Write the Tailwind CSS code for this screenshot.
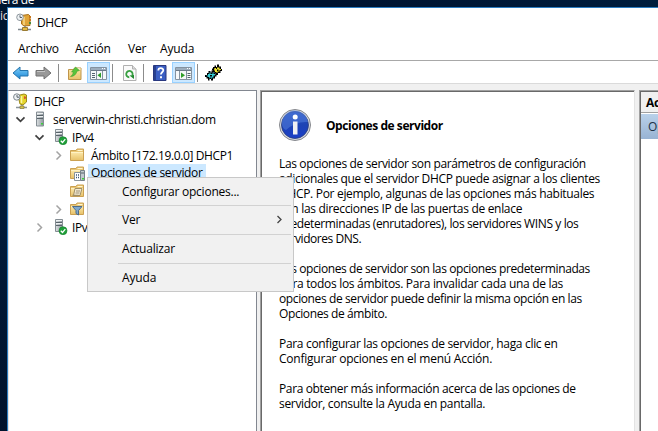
<!DOCTYPE html>
<html lang="es">
<head>
<meta charset="utf-8">
<title>DHCP</title>
<script src="https://cdn.jsdelivr.net/npm/@tailwindcss/browser@4"></script>
</head>
<body class="w-[658px] h-[431px] overflow-hidden bg-[#00142d] font-['Open_Sans','Noto_Sans',sans-serif] text-[12px] leading-[15px] text-black">
<svg class="absolute w-0 h-0">
  <defs>
    <linearGradient id="fold" x1="0" y1="0" x2="0" y2="1"><stop offset="0" stop-color="#fbe6a6"/><stop offset="1" stop-color="#e8c36c"/></linearGradient>
    <linearGradient id="srv" x1="0" y1="0" x2="1" y2="0"><stop offset="0" stop-color="#dde1e3"/><stop offset="1" stop-color="#8d969c"/></linearGradient>
    <linearGradient id="blu" x1="0" y1="0" x2="0" y2="1"><stop offset="0" stop-color="#7fd0fa"/><stop offset="1" stop-color="#1b86d6"/></linearGradient>
    <linearGradient id="info" x1="0" y1="0" x2="0" y2="1"><stop offset="0" stop-color="#2a55c4"/><stop offset="0.5" stop-color="#1d43b4"/><stop offset="1" stop-color="#1b3fc8"/></linearGradient>
    <symbol id="folder" viewBox="0 0 16 16">
      <path d="M1.500 3.500h5.500l1-1.500h6.500v11.500h-13z" fill="#e9c673" stroke="#cba152"/>
      <path d="M2 5.500h12v7.500h-12z" fill="url(#fold)"/>
      <path d="M8.500 3.500h5" stroke="#fff6d0"/>
      <path d="M2 5.500h12" stroke="#fff2c4"/>
    </symbol>
    <symbol id="server" viewBox="0 0 16 16">
      <path d="M4.500 1h7v14h-7z" fill="url(#srv)" stroke="#858e94"/>
      <path d="M5 4.500h6M5 7.500h6" stroke="#59636a"/>
      <path d="M5 2.500h6M5 5.500h6" stroke="#edf0f1"/>
      <path d="M9 12h2v1.500H9z" fill="#3bd13a"/>
    </symbol>
    <symbol id="serverok" viewBox="0 0 16 16">
      <path d="M2.500 .5h7v12h-7z" fill="url(#srv)" stroke="#858e94"/>
      <path d="M3 3.500h6M3 6.500h6" stroke="#59636a"/>
      <path d="M3 1.500h6M3 4.500h6" stroke="#edf0f1"/>
      <circle cx="10" cy="11.700" r="4" fill="#1fa03a" stroke="#128028" stroke-width=".6"/>
      <path d="M7.800 11.800l1.700 1.700 2.800-3.300" fill="none" stroke="#fff" stroke-width="1.300"/>
    </symbol>
    <symbol id="open" viewBox="0 0 11 11"><path d="M1.500 3.300l4 4 4-4" fill="none" stroke="#404040" stroke-width="1.700"/></symbol>
    <symbol id="closed" viewBox="0 0 11 11"><path d="M3.500 1.500l4 4-4 4" fill="none" stroke="#a3a3a3" stroke-width="1.500"/></symbol>
  </defs>
</svg>
<div class="relative w-[658px] h-[431px] overflow-hidden bg-linear-to-b from-[#001630] via-[#001b3a] to-[#00122b]">
  <div class="absolute left-0 top-0 w-full h-[7px] bg-linear-to-r from-[#001530] via-[#00132f] to-[#001d3d]"></div>
  <span class="absolute -left-[6px] -top-[8px] text-white whitespace-nowrap tracking-[-0.4px]">nera de</span>
  <span class="absolute left-0 top-[8px] text-[#e8ddd8] tracking-[-0.2px]">ic</span>

  <main class="absolute left-[7px] top-[7px] w-[651px] h-[424px] border-l border-t border-[#2b7cc0] bg-white flex flex-col">
    <header class="h-[29px] flex items-center pl-[8px] gap-[4px]">
      <svg width="17" height="18" viewBox="0 0 17 18" class="shrink-0 -mt-[1px]">
        <path d="M5.500 2.500l7-1 1.500 1.500v9.500l-6 .5-2.500-2z" fill="#e0a53a" stroke="#a8701c"/>
        <path d="M8 4v8" stroke="#f7d98c" stroke-width="1.500"/>
        <path d="M13 3h2v2h-2zM13 6h2v2h-2z" fill="#c9761c"/><path d="M13 9h2v2h-2z" fill="#4a8a3a"/>
        <circle cx="4" cy="4.300" r="3.300" fill="#eef1f3" stroke="#8e979e"/><path d="M4 2.300v2.200h2" fill="none" stroke="#56616b"/>
        <path d="M9 13v2M2 16.500h13" stroke="#7f888e" stroke-width="1.500"/><path d="M6.500 14.500h5v3h-5z" fill="#e5ba43" stroke="#9a7c33"/>
      </svg>
      <span class="tracking-[-0.45px]">DHCP</span>
    </header>
    <nav class="h-[23px] flex items-center pl-[10px] pb-[1px]">
      <span class="w-[57px] tracking-[-0.15px]">Archivo</span>
      <span class="w-[53px] tracking-[-0.15px]">Acción</span>
      <span class="w-[32px] tracking-[-0.15px]">Ver</span>
      <span class="tracking-[-0.15px]">Ayuda</span>
    </nav>
    <div class="h-[24px] shrink-0 border-t border-[#a8a8a8] border-b border-b-[#dadada] flex items-center pl-[4px] pt-px">
      <svg width="17" height="16" viewBox="0 0 17 16"><path d="M1 8l7-6v3.500h8v5.500h-8v3z" fill="url(#blu)" stroke="#2474ad"/></svg>
      <svg width="17" height="16" viewBox="0 0 17 16" class="ml-[6px]"><path d="M16 8l-7-6v3.500h-8v5.500h8v3z" fill="#999" stroke="#717171"/><path d="M2 6.500h8" stroke="#c5c5c5"/></svg>
      <i class="w-px h-[18px] bg-[#8c8c8c] ml-[6px]"></i>
      <svg width="16" height="16" viewBox="0 0 16 16" class="ml-[8px]"><path d="M1.500 4.500h5l1-1.500h6.500v11.500h-12.500z" fill="url(#fold)" stroke="#c0954a"/><path d="M10 3h3.500v2H10z" fill="#f5e9c0"/><path d="M3.500 11.500c1.500-1 2.500-2.500 2.800-4.500H4.500L8.500 2l4 3.500-2.500.7C9.300 9.200 7 11.500 3.500 11.500z" fill="#58c43c" stroke="#3d9a2a" stroke-width=".5"/></svg>
      <span class="ml-[4px] w-[23px] h-[21px] bg-[#cce8ff] border border-[#99d1ff] flex items-center justify-center">
        <svg width="17" height="14" viewBox="0 0 17 14"><path d="M.5 1.500h16v12H.5z" fill="#f5f8fa" stroke="#8492a0"/><path d="M1 2h15v2H1z" fill="#9cadbd"/><path d="M12 2.500h1M14 2.500h1" stroke="#fff"/><path d="M1 4.500h15" stroke="#6b7a89"/><path d="M6.500 5v8.500M12.500 5v8.500" stroke="#8492a0"/><path d="M2 7.500h3M2 9.500h3M2 11.500h3" stroke="#53636f"/><path d="M11 6.500v5.500l-3.500-2.700z" fill="#2f9e29"/></svg>
      </span>
      <i class="w-px h-[18px] bg-[#8c8c8c] ml-[2px]"></i>
      <svg width="14" height="16" viewBox="0 0 14 16" class="ml-[10px]"><path d="M.5 .5h9l3.500 3.500v11.500H.5z" fill="#fafafa" stroke="#b0b0b0"/><path d="M9.500 .5V4h3.500" fill="#ddd" stroke="#b0b0b0"/><path d="M9.300 10.500a3.200 3.200 0 1 0-3 1.800" fill="none" stroke="#39a042" stroke-width="1.800"/><path d="M6.500 10.500l4.500-.5v4z" fill="#238c30"/></svg>
      <i class="w-px h-[18px] bg-[#8c8c8c] ml-[6px]"></i>
      <svg width="14" height="16" viewBox="0 0 14 16" class="ml-[9px]"><path d="M.5 .5h12.500v15H.5z" fill="#3b5fc4" stroke="#28377f"/><path d="M1 1h2v14H1z" fill="#28408f"/><path d="M5.300 5.500c0-3 5-3 5-.2 0 2-2.400 2-2.400 4.200" fill="none" stroke="#fff" stroke-width="1.800"/><path d="M7 11.200h2v2H7z" fill="#fff"/></svg>
      <span class="ml-[5px] w-[23px] h-[21px] bg-[#cce8ff] border border-[#99d1ff] flex items-center justify-center">
        <svg width="17" height="14" viewBox="0 0 17 14"><path d="M.5 1.500h16v12H.5z" fill="#f5f8fa" stroke="#8492a0"/><path d="M1 2h15v2H1z" fill="#9cadbd"/><path d="M12 2.500h1M14 2.500h1" stroke="#fff"/><path d="M1 4.500h15" stroke="#6b7a89"/><path d="M4.500 5v8.500M11.500 5v8.500" stroke="#8492a0"/><path d="M12.500 7.500h3M12.500 9.500h3M12.500 11.500h3" stroke="#53636f"/><path d="M6 6.500v5.500l4-2.700z" fill="#2f9e29"/></svg>
      </span>
      <i class="w-px h-[18px] bg-[#8c8c8c] ml-[2px]"></i>
      <svg width="17" height="17" viewBox="0 0 17 17" class="ml-[7px]">
        <path d="M8 3h1.500V1.500H11V3h1V.5h2V2.500h2V5h1v2h-1.500v2H13v2h-2V9.500H9.500V8H8V6.500H7V4.500h1z" fill="#000"/>
        <path d="M9.500 4h1.500v1h1V3.500h2.500V5H16v1h-1.500v1.500H12.500V9H11.500V8H10V6.500H9z" fill="#efe52c"/>
        <path d="M12 5.500h1.500V7H12z" fill="#000"/>
        <path d="M2 9h1.500V7H5.500v1.500h1V6.500h2V8.500h2V10.500h1v2H10v2H8v2H6V15H4.500v1.500H3V14.500H1.500V13H0v-2h2z" fill="#000"/>
        <path d="M3 10h1.500V8.500H5.500V10H7.500V8.500H8.500V10H10v1.500H8.500V13.500H7V15H6.500V13.500H4.500V14.500H4V13H2.500V12H1.500V11.500H3z" fill="#35cbd3"/>
        <path d="M5 11h2v1.500H5z" fill="#000"/>
      </svg>
    </div>
    <section class="flex-1 min-h-0 bg-[#f0f0f0] pt-[6px] flex">
      <div class="w-[249px] shrink-0 border-t border-r border-l border-[#828790] border-l-[#e3e3e3] bg-white pt-px flex flex-col">
        <div class="h-[18px] flex items-center pl-[5px]">
          <svg width="16" height="16" viewBox="0 0 16 16" class="shrink-0 -ml-px"><path d="M5 2.500l6-1.500 2.500 1v7l-3.500 3-3-1z" fill="#e5d52c" stroke="#9c8b1c"/><path d="M8.500 3v7" stroke="#fbf5a0" stroke-width="1.500"/><path d="M11 3l2 1v1.500l-2 .5z" fill="#d85a28"/><circle cx="3.800" cy="4" r="3.200" fill="#eef1f3" stroke="#7e878e"/><path d="M4 2v2.200h2" fill="none" stroke="#56616b"/><path d="M9 12v2M3 14.500h11" stroke="#89939a" stroke-width="1.500"/><path d="M7 13h4v2.500H7z" fill="#d4c14a" stroke="#857a3a" stroke-width=".7"/></svg>
          <span class="ml-[5px] tracking-[-0.45px]">DHCP</span>
        </div>
        <div class="h-[18px] flex items-center pl-[6px]">
          <svg width="11" height="11"><use href="#open"/></svg>
          <svg width="16" height="16" class="ml-[6px]"><use href="#server"/></svg>
          <span class="ml-[5px] whitespace-nowrap tracking-[-0.32px]">serverwin-christi.christian.dom</span>
        </div>
        <div class="h-[18px] flex items-center pl-[25px]">
          <svg width="11" height="11"><use href="#open"/></svg>
          <svg width="16" height="16" class="ml-[8px]"><use href="#serverok"/></svg>
          <span class="ml-[3px] tracking-[-0.45px]">IPv4</span>
        </div>
        <div class="h-[18px] flex items-center pl-[44px]">
          <svg width="11" height="11"><use href="#closed"/></svg>
          <svg width="16" height="16" class="ml-[5px]"><use href="#folder"/></svg>
          <span class="ml-[6px] whitespace-nowrap tracking-[-0.37px]">Ámbito [172.19.0.0] DHCP1</span>
        </div>
        <div class="h-[18px] flex items-center pl-[60px]">
          <svg width="17" height="16" viewBox="0 0 17 16" class="shrink-0"><use href="#folder" width="16" height="16"/><path d="M5.500 7.500h6v8h-6z" fill="#fff" stroke="#8a949b"/><path d="M7 10h1M9 10h1M7 12.500h1M9 12.500h1" stroke="#3d5673" stroke-width="1.300"/><path d="M11.500 5.500h4v10h-4z" fill="#c0c9ce" stroke="#77828a"/><path d="M12 8h3" stroke="#59636a"/><path d="M13 13h2v1.500h-2z" fill="#3bd13a"/></svg>
          <span class="ml-[2px] h-[18px] w-[118px] pl-[3px] leading-[17px] bg-[#cce8ff] whitespace-nowrap tracking-[-0.36px]">Opciones de servidor</span>
        </div>
        <div class="h-[18px] flex items-center pl-[60px]">
          <svg width="16" height="16" viewBox="0 0 16 16"><use href="#folder"/><path d="M6 5.500h7l-2 7H4.500z" fill="#f3ead2" stroke="#a08f66"/><path d="M7 8h4M6.500 10h4" stroke="#9d9174"/><path d="M3.500 12.500h6" stroke="#a08f66" stroke-width="1.500"/></svg>
        </div>
        <div class="h-[18px] flex items-center pl-[44px]">
          <svg width="11" height="11"><use href="#closed"/></svg>
          <svg width="16" height="16" viewBox="0 0 16 16" class="ml-[5px]"><use href="#folder"/><path d="M3.500 5.500h9.500l-3.500 4v4.500l-2.500-1.500v-3z" fill="#7fa8cd" stroke="#4d6c8a"/></svg>
        </div>
        <div class="h-[18px] flex items-center pl-[25px]">
          <svg width="11" height="11"><use href="#closed"/></svg>
          <svg width="16" height="16" class="ml-[8px]"><use href="#serverok"/></svg>
          <span class="ml-[3px] tracking-[-0.45px]">IPv6</span>
        </div>
      </div>
      <div class="ml-[3px] w-[375px] shrink-0 border-l border-t border-[#a0a0a0] border-r border-r-[#e3e3e3]">
       <div class="h-full border-l border-t border-[#696969] bg-white pl-[17px]">
        <div class="flex items-center h-[65px]">
          <svg width="34" height="34" viewBox="0 0 34 34" class="-ml-px mt-px"><circle cx="17" cy="17" r="15.500" fill="#d9dbe0" stroke="#85878c"/><circle cx="17" cy="17" r="13.500" fill="url(#info)" stroke="#2a3c78" stroke-width=".8"/><path d="M4 17A13 13 0 0 1 30 14Q18 13 8 22Q5 21 4 17z" fill="#4f7ad9" opacity=".6"/><circle cx="17.200" cy="9" r="2.500" fill="#fff"/><path d="M15 13.500h4.500v13H15z" fill="#f0f0f2"/></svg>
          <h1 class="ml-[14px] mt-px font-bold tracking-[-0.45px] whitespace-nowrap">Opciones de servidor</h1>
        </div>
        <div class="-mt-px whitespace-nowrap flex flex-col gap-[15px] text-[12px] leading-[15px]">
          <p><span class="tracking-[-0.36px]">Las opciones de servidor son parámetros de configuración</span><br><span class="tracking-[-0.34px]">adicionales que el servidor DHCP puede asignar a los clientes</span><br><span class="tracking-[-0.31px]">DHCP. Por ejemplo, algunas de las opciones más habituales</span><br><span class="tracking-[-0.31px]">son las direcciones IP de las puertas de enlace</span><br><span class="tracking-[-0.39px]">predeterminadas (enrutadores), los servidores WINS y los</span><br><span class="tracking-[-0.45px]">servidores DNS.</span></p>
          <p><span class="tracking-[-0.4px]">Las opciones de servidor son las opciones predeterminadas</span><br><span class="tracking-[-0.31px]">para todos los ámbitos. Para invalidar cada una de las</span><br><span class="tracking-[-0.39px]">opciones de servidor puede definir la misma opción en las</span><br><span class="tracking-[-0.4px]">Opciones de ámbito.</span></p>
          <p><span class="tracking-[-0.32px]">Para configurar las opciones de servidor, haga clic en</span><br><span class="tracking-[-0.23px]">Configurar opciones en el menú Acción.</span></p>
          <p><span class="tracking-[-0.37px]">Para obtener más información acerca de las opciones de</span><br><span class="tracking-[-0.32px]">servidor, consulte la Ayuda en pantalla.</span></p>
        </div>
       </div>
      </div>
      <aside class="ml-[4px] flex-1 min-w-0 overflow-hidden border-l border-t border-[#a0a0a0] whitespace-nowrap">
       <div class="h-full border-l border-t border-[#696969] bg-white">
        <div class="h-[21px] bg-[#f0f0f0] border-b border-[#a0a0a0] pl-[5px] leading-[21px] font-bold tracking-[-0.3px]">Acciones</div>
        <div class="mt-px h-[25px] bg-linear-to-b from-[#b9d1ea] to-[#98b3d3] pl-[7px] leading-[25px] text-[#1e3246]">Opciones de servidor</div>
       </div>
      </aside>
    </section>
  </main>

  <div class="absolute left-[87px] top-[177px] w-[207px] h-[115px] bg-[#f1f1f1] border border-[#c8c8c8] pl-[30px] pr-[2px] flex flex-col">
    <div class="h-[27px] flex items-center pl-[4px] pb-px tracking-[-0.24px]">Configurar opciones...</div>
    <div class="h-px bg-[#d2d2d2]"></div>
    <div class="h-[28px] flex items-center justify-between pl-[4px] pr-[8px] pb-px tracking-[-0.2px]"><span>Ver</span><svg width="7" height="9" viewBox="0 0 7 9"><path d="M1.500 1l3.500 3.500L1.500 8" fill="none" stroke="#444" stroke-width="1.300"/></svg></div>
    <div class="h-px bg-[#d2d2d2]"></div>
    <div class="h-[28px] flex items-center pl-[4px] pb-px tracking-[-0.2px]">Actualizar</div>
    <div class="h-px bg-[#d2d2d2]"></div>
    <div class="h-[27px] flex items-center pl-[4px] tracking-[-0.15px]">Ayuda</div>
  </div>
</div>
</body>
</html>
